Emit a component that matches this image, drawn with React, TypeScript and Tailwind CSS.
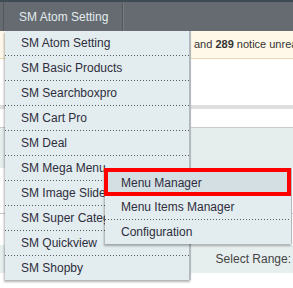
const menuItems = [
  "SM Atom Setting",
  "SM Basic Products",
  "SM Searchboxpro",
  "SM Cart Pro",
  "SM Deal",
  "SM Mega Menu",
  "SM Image Slider",
  "SM Super Categories",
  "SM Quickview",
  "SM Shopby",
]

const subItems = ["Menu Manager", "Menu Items Manager", "Configuration"]

function Dots() {
  return <div className="h-px w-full bg-[linear-gradient(to_right,#5a5a5a_1px,transparent_1px)] bg-[length:3px_1px]" />
}

export default function App() {
  return (
    <div className="relative h-[288px] w-[293px] overflow-hidden bg-white font-['Liberation_Sans',Arial,sans-serif]">
      {/* top nav */}
      <div className="flex h-[31px] border-t-2 border-[#3c4c52] bg-[#656b71]">
        <div className="w-[4px] border-r border-[#52575b]" />
        <div className="flex w-[119px] items-center border-r border-[#52575b] pl-[15px] text-[12px] text-[#e3ebee]">
          SM Atom Setting
        </div>
        <div className="w-px bg-[#767c82]" />
      </div>

      {/* notice */}
      <div className="flex h-[28px] items-center border-b border-[#ead8b2] bg-[#fff8e8] pl-[194px] text-[11px] whitespace-nowrap text-[#333]">
        and&nbsp;<b>289</b>&nbsp;notice unread
      </div>

      <div className="h-[46px]" />
      <div className="h-[4px] bg-[#dedede]" />
      <div className="h-[18px]" />
      <div className="h-[41px] border-t border-[#cacaca] bg-[#e6eeed]" />
      <div className="h-[45px]" />
      <div className="h-[32px] border-t border-[#cacaca]" />
      <div className="flex h-[28px] items-center justify-end bg-[#e6eeee] pr-[2px] text-[12px] text-[#444]">
        Select Range:
      </div>

      {/* dropdown */}
      <div className="absolute top-[31px] left-[5px] w-[186px] border-r-2 border-[#b3bbbe] bg-[#e3ecee] shadow-[-1px_2px_2px_rgba(0,0,0,0.3)]">
        {menuItems.map((item, i) => (
          <div key={item}>
            <div className="flex h-[24px] items-center pl-[16px] text-[12px] whitespace-nowrap text-[#2e2e40]">{item}</div>
            {i < menuItems.length - 1 && <Dots />}
          </div>
        ))}
      </div>

      {/* submenu */}
      <div className="absolute top-[168px] left-[105px] w-[187px] border-r border-[#b3bbbe] bg-[#e3ecee] pt-[2px] shadow-[-1px_2px_2px_rgba(0,0,0,0.3)]">
        <div className="flex h-[25px] items-center pl-[16px] text-[12px] text-[#2e2e40]">{subItems[0]}</div>
        <div className="flex h-[24px] items-center pl-[16px] text-[12px] text-[#2e2e40]">{subItems[1]}</div>
        <Dots />
        <div className="flex h-[24px] items-center pl-[16px] text-[12px] text-[#2e2e40]">{subItems[2]}</div>
        <div className="absolute top-0 left-[-1px] h-[28px] w-[187px] border-4 border-[#ff0000]">
          <div className="h-full w-full bg-[#d3dfe2]" />
        </div>
        <div className="absolute top-[2px] left-0 flex h-[25px] items-center pl-[16px] text-[12px] text-[#2e2e40]">{subItems[0]}</div>
      </div>
    </div>
  )
}
